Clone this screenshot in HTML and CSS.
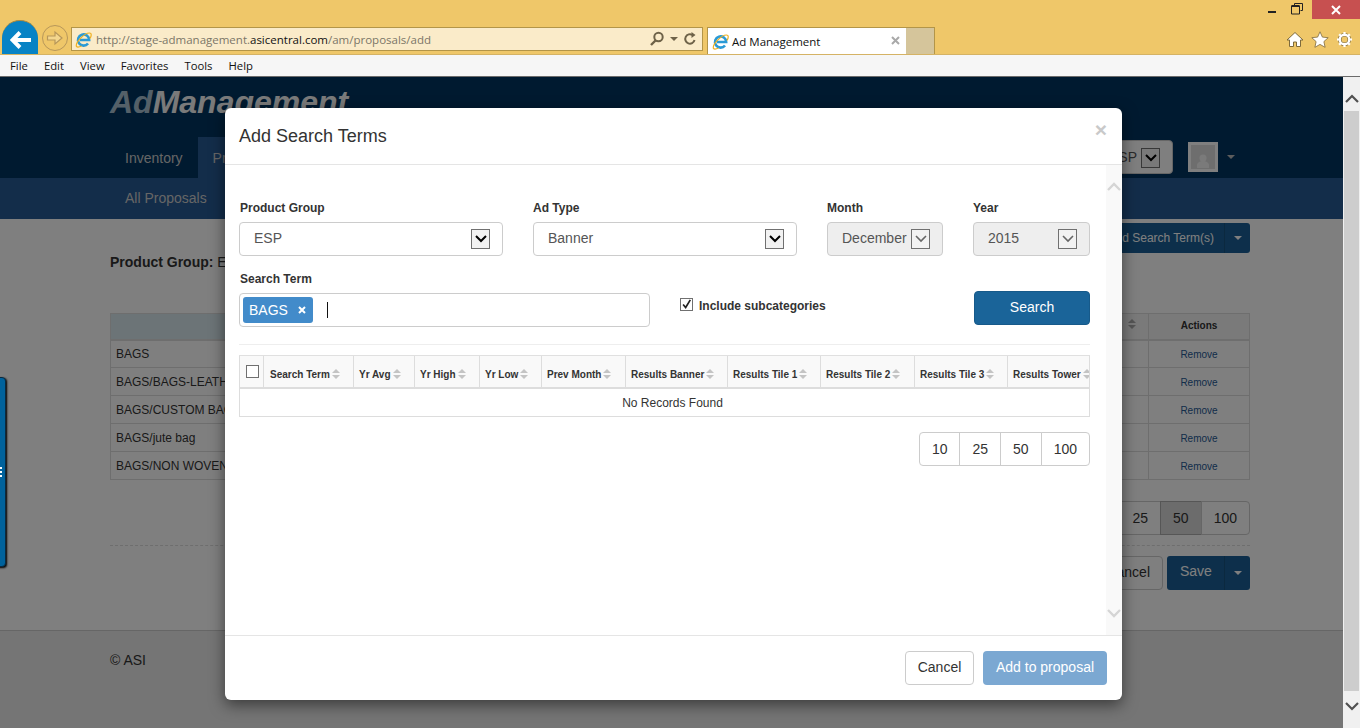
FILE: index.html
```html
<!DOCTYPE html>
<html lang="en">
<head>
    <meta charset="UTF-8">
    <title>Ad Management</title>
    <link rel="stylesheet" href="styles.css">
</head>
<body>
    <div class="browser-bar">
        <div class="window-controls">
            <svg class="win-icon" width="12" height="12" viewBox="0 0 12 12"><rect x="1" y="7" width="8" height="2" fill="#222"/></svg>
            <svg class="win-icon restore" width="12" height="12" viewBox="0 0 12 12"><path d="M3.500 2.500V.5h8v7h-2M.5 3h8v8h-8z" fill="none" stroke="#222"/><path d="M.5 3h8" stroke="#222" stroke-width="2"/></svg>
            <div class="win-close">
                <svg width="10" height="10" viewBox="0 0 10 10"><path d="M1 1l8 8M9 1l-8 8" stroke="#fff" stroke-width="2"/></svg>
            </div>
        </div>
        <div class="nav-row">
            <div class="back-btn">
                <svg width="21" height="18" viewBox="0 0 21 18"><path d="M10 1.500L2.500 9l7.500 7.500M3 9h18" fill="none" stroke="#fff" stroke-width="4"/></svg>
            </div>
            <div class="fwd-btn">
                <svg width="18" height="16" viewBox="0 0 18 16"><path d="M1.500 6H9V2l7 6-7 6v-4H1.500z" fill="#f3d68d" stroke="#b7975a" stroke-width="1.200"/></svg>
            </div>
            <div class="address-bar">
                <svg class="ie-icon" width="17" height="17" viewBox="0 0 17 17"><path d="M13 12.500A5.600 5.600 0 1 1 14.200 9H5" fill="none" stroke="#2a9ad6" stroke-width="2.600"/><path d="M1.500 15.500C0 12 9 2 14.500 2c2.500 0 2 3 .5 5.500M1.500 15.500c1 1 3 .5 5-.5" fill="none" stroke="#eeb021" stroke-width="1.200"/></svg>
                <span class="url">http://stage-admanagement.<b>asicentral.com</b>/am/proposals/add</span>
                <div class="address-tools">
                    <svg width="16" height="16" viewBox="0 0 16 16"><circle cx="9.500" cy="6" r="4.200" fill="none" stroke="#6e6248" stroke-width="2"/><path d="M6.500 9.500L2 14" stroke="#6e6248" stroke-width="2.400"/></svg>
                    <span class="tiny-caret"></span>
                    <svg width="14" height="14" viewBox="0 0 14 14"><path d="M11.500 8A4.700 4.700 0 1 1 9.500 3" fill="none" stroke="#6e6248" stroke-width="2"/><path d="M8.500 0v6l4-3z" fill="#6e6248"/></svg>
                </div>
            </div>
            <div class="tab">
                <svg class="ie-icon" width="17" height="17" viewBox="0 0 17 17"><path d="M13 12.500A5.600 5.600 0 1 1 14.200 9H5" fill="none" stroke="#2a9ad6" stroke-width="2.600"/><path d="M1.500 15.500C0 12 9 2 14.500 2c2.500 0 2 3 .5 5.500M1.500 15.500c1 1 3 .5 5-.5" fill="none" stroke="#eeb021" stroke-width="1.200"/></svg>
                <span class="tab-title">Ad Management</span>
                <svg class="tab-close" width="9" height="9" viewBox="0 0 9 9"><path d="M1 1l7 7M8 1L1 8" stroke="#a9a9a9" stroke-width="2"/></svg>
            </div>
            <div class="new-tab"></div>
            <div class="browser-tools">
                <svg width="18" height="17" viewBox="0 0 18 17"><path d="M9 1.500L1 9h2.500v6.500h4V11h3v4.500h4V9H17z" fill="#fff" stroke="#7d6a3c"/></svg>
                <svg width="18" height="17" viewBox="0 0 18 17"><path d="M9 .8l2.400 5.300 5.800.6-4.300 3.900 1.200 5.700L9 13.400l-5.100 2.900 1.200-5.700L.8 6.700l5.800-.6z" fill="#fff" stroke="#7d6a3c" stroke-width=".8"/></svg>
                <svg width="17" height="17" viewBox="0 0 17 17"><circle cx="8.500" cy="8.500" r="4.800" fill="none" stroke="#7d6a3c" stroke-width="3.600"/><circle cx="8.500" cy="8.500" r="4.800" fill="none" stroke="#fff" stroke-width="2.400"/><path d="M8.500 1v3M8.500 13v3M1 8.500h3M13 8.500h3M3.200 3.200l2.100 2.100M11.700 11.700l2.100 2.100M13.800 3.200l-2.100 2.100M5.300 11.700l-2.100 2.100" stroke="#fff" stroke-width="2.200"/></svg>
            </div>
        </div>
    </div>
    <div class="menu-bar">
        <span>File</span><span>Edit</span><span>View</span><span>Favorites</span><span>Tools</span><span>Help</span>
    </div>

    <div class="viewport">
        <div class="page">
            <header class="site-header">
                <div class="logo"><span class="logo-ad">Ad</span>Management</div>
                <div class="main-nav">
                    <a class="nav-link">Inventory</a>
                    <a class="nav-link active">Proposals</a>
                    <div class="nav-right">
                        <div class="fake-select small">ESP<span class="select-arrow"><svg width="12" height="8" viewBox="0 0 12 8"><path d="M1 1l5 5 5-5" fill="none" stroke="#000" stroke-width="2"/></svg></span></div>
                        <div class="avatar">
                            <svg width="18" height="18" viewBox="0 0 18 18"><circle cx="9" cy="7" r="3.500" fill="#f5f5f5"/><path d="M3 17v-3c0-2 3-4 6-4s6 2 6 4v3z" fill="#f5f5f5"/></svg>
                        </div>
                        <span class="caret light"></span>
                    </div>
                </div>
            </header>
            <nav class="sub-nav"><a>All Proposals</a></nav>
            <main class="content">
                <div class="content-top">
                    <div class="group-line"><b>Product Group:</b> ESP</div>
                    <div class="btn-group add-group">
                        <span class="btn-main">Add Search Term(s)</span><span class="btn-split"><span class="caret light"></span></span>
                    </div>
                </div>
                <table class="terms-table">
                    <thead>
                        <tr><th class="col-term">Search Term</th><th class="col-rest"><i class="sort"></i></th><th class="col-actions">Actions</th></tr>
                    </thead>
                    <tbody>
                        <tr><td>BAGS</td><td></td><td class="remove">Remove</td></tr>
                        <tr><td>BAGS/BAGS-LEATHER</td><td></td><td class="remove">Remove</td></tr>
                        <tr><td>BAGS/CUSTOM BAGS</td><td></td><td class="remove">Remove</td></tr>
                        <tr><td>BAGS/jute bag</td><td></td><td class="remove">Remove</td></tr>
                        <tr><td>BAGS/NON WOVEN</td><td></td><td class="remove">Remove</td></tr>
                    </tbody>
                </table>
                <div class="pager under-pager">
                    <span>10</span><span>25</span><span class="current">50</span><span>100</span>
                </div>
                <div class="page-actions">
                    <span class="btn-cancel">Cancel</span>
                    <div class="btn-group save-group">
                        <span class="btn-main">Save</span><span class="btn-split"><span class="caret light"></span></span>
                    </div>
                </div>
            </main>
            <footer class="site-footer">© ASI</footer>
        </div>
        <div class="overlay"></div>
        <div class="side-tab"><span class="grip"></span></div>

        <div class="modal">
            <div class="modal-header">
                <h4>Add Search Terms</h4>
                <span class="modal-close">×</span>
            </div>
            <div class="modal-body">
                <div class="modal-scroll">
                    <div class="form-row">
                        <div class="field w-product">
                            <label>Product Group</label>
                            <div class="fake-select">ESP<span class="select-arrow"><svg width="12" height="8" viewBox="0 0 12 8"><path d="M1 1l5 5 5-5" fill="none" stroke="#000" stroke-width="2"/></svg></span></div>
                        </div>
                        <div class="field w-adtype">
                            <label>Ad Type</label>
                            <div class="fake-select">Banner<span class="select-arrow"><svg width="12" height="8" viewBox="0 0 12 8"><path d="M1 1l5 5 5-5" fill="none" stroke="#000" stroke-width="2"/></svg></span></div>
                        </div>
                        <div class="field w-month">
                            <label>Month</label>
                            <div class="fake-select disabled">December<span class="select-arrow"><svg width="12" height="8" viewBox="0 0 12 8"><path d="M1 1l5 5 5-5" fill="none" stroke="#666" stroke-width="1.600"/></svg></span></div>
                        </div>
                        <div class="field w-year">
                            <label>Year</label>
                            <div class="fake-select disabled">2015<span class="select-arrow"><svg width="12" height="8" viewBox="0 0 12 8"><path d="M1 1l5 5 5-5" fill="none" stroke="#666" stroke-width="1.600"/></svg></span></div>
                        </div>
                    </div>
                    <div class="search-row">
                        <div class="field w-term">
                            <label class="term-label">Search Term</label>
                            <div class="tag-input">
                                <span class="tag">BAGS<svg width="8" height="8" viewBox="0 0 8 8"><path d="M1 1l6 6M7 1L1 7" stroke="#fff" stroke-width="2"/></svg></span>
                                <span class="text-cursor"></span>
                            </div>
                        </div>
                        <div class="subcat">
                            <span class="checkbox"><svg width="13" height="13" viewBox="0 0 13 13"><path d="M2.500 6.500l3 3.500 5.500-9" fill="none" stroke="#222" stroke-width="2"/></svg></span>
                            <span class="subcat-text">Include subcategories</span>
                        </div>
                        <span class="btn-search">Search</span>
                    </div>
                    <div class="results">
                        <div class="results-head">
                            <div class="cell cell-check"><span class="checkbox empty"></span></div>
                            <div class="cell c1">Search Term<i class="sort"></i></div>
                            <div class="cell c2">Yr Avg<i class="sort"></i></div>
                            <div class="cell c3">Yr High<i class="sort"></i></div>
                            <div class="cell c4">Yr Low<i class="sort"></i></div>
                            <div class="cell c5">Prev Month<i class="sort"></i></div>
                            <div class="cell c6">Results Banner<i class="sort"></i></div>
                            <div class="cell c7">Results Tile 1<i class="sort"></i></div>
                            <div class="cell c8">Results Tile 2<i class="sort"></i></div>
                            <div class="cell c9">Results Tile 3<i class="sort"></i></div>
                            <div class="cell c10">Results Tower<i class="sort"></i></div>
                        </div>
                        <div class="no-records">No Records Found</div>
                    </div>
                    <div class="pager modal-pager">
                        <span>10</span><span>25</span><span>50</span><span>100</span>
                    </div>
                </div>
                <div class="modal-scrollbar">
                    <svg width="14" height="9" viewBox="0 0 14 9"><path d="M1 8l6-6 6 6" fill="none" stroke="#d5d5d5" stroke-width="2.400"/></svg>
                    <svg width="14" height="9" viewBox="0 0 14 9"><path d="M1 1l6 6 6-6" fill="none" stroke="#d5d5d5" stroke-width="2.400"/></svg>
                </div>
            </div>
            <div class="modal-footer">
                <span class="btn-plain">Cancel</span>
                <span class="btn-add">Add to proposal</span>
            </div>
        </div>

        <div class="page-scrollbar">
            <div class="sb-btn sb-up"><svg width="14" height="9" viewBox="0 0 14 9"><path d="M1 8l6-6 6 6" fill="none" stroke="#505050" stroke-width="2.200"/></svg></div>
            <div class="sb-thumb"></div>
            <div class="sb-btn sb-down"><svg width="14" height="9" viewBox="0 0 14 9"><path d="M1 1l6 6 6-6" fill="none" stroke="#505050" stroke-width="2.200"/></svg></div>
        </div>
    </div>
</body>
</html>
```

FILE: styles.css
```css
* {
    box-sizing: border-box;
}

html, body {
    margin: 0;
    height: 100%;
    overflow: hidden;
}

body {
    display: flex;
    flex-direction: column;
    font-family: "Liberation Sans", Arial, sans-serif;
    font-size: 14px;
    color: #333;
    background: #fff;
}

/* browser chrome */
.browser-bar {
    position: relative;
    height: 55px;
    flex: none;
    background: #efc769;
    border-bottom: 1px solid #d5b365;
    display: flex;
    align-items: flex-end;
}

.window-controls {
    position: absolute;
    top: 0;
    right: 0;
    display: flex;
    align-items: flex-start;
}

.win-icon {
    margin-top: 4px;
    margin-right: 12px;
}

.win-icon.restore {
    margin-top: 3px;
    margin-right: 9px;
}

.win-close {
    width: 48px;
    height: 19px;
    background: #c75050;
    display: flex;
    align-items: center;
    justify-content: center;
}

.nav-row {
    display: flex;
    align-items: flex-end;
    width: 100%;
    height: 35px;
    padding-left: 2px;
}

.back-btn {
    width: 36px;
    height: 34px;
    padding-top: 4px;
    border-radius: 18px 18px 0 0;
    background: #0783c5;
    display: flex;
    align-items: center;
    justify-content: center;
    border-top: 1px solid #b08a3c;
}

.fwd-btn {
    width: 26px;
    height: 26px;
    margin: 0 3px 3px 4px;
    border-radius: 50%;
    border: 1px solid #b7975a;
    display: flex;
    align-items: center;
    justify-content: center;
}

.address-bar {
    width: 632px;
    height: 24px;
    margin-bottom: 3px;
    background: #faebc9;
    border: 1px solid #b39548;
    display: flex;
    align-items: center;
    padding-left: 3px;
    color: #7b7668;
}

.ie-icon {
    flex: none;
}

.url {
    margin-left: 4px;
    white-space: nowrap;
    font-family: "Open Sans", sans-serif;
    font-size: 11.500px;
}

.url b {
    font-weight: normal;
    color: #111;
}

.address-tools {
    margin-left: auto;
    display: flex;
    align-items: center;
    gap: 5px;
    padding-right: 5px;
}

.tiny-caret {
    width: 0;
    height: 0;
    border-left: 4px solid transparent;
    border-right: 4px solid transparent;
    border-top: 4px solid #6e6248;
}

.tab {
    width: 199px;
    height: 27px;
    margin-left: 4px;
    background: #fff;
    border: 1px solid #b39548;
    border-bottom: 0;
    border-right: 0;
    display: flex;
    align-items: center;
    padding-left: 4px;
    color: #111;
}

.tab-title {
    margin-left: 3px;
    font-family: "Open Sans", sans-serif;
    font-size: 11.500px;
}

.tab-close {
    margin-left: auto;
    margin-right: 6px;
    margin-bottom: 1px;
}

.new-tab {
    width: 29px;
    height: 27px;
    background: #d5c59b;
    border: 1px solid #b39548;
    border-bottom: 0;
    border-left: 0;
}

.browser-tools {
    margin-left: auto;
    margin-bottom: 6px;
    padding-right: 7px;
    display: flex;
    gap: 7px;
}

.menu-bar {
    height: 22px;
    flex: none;
    background: #f6f6f6;
    border-bottom: 1px solid #6b6b6b;
    display: flex;
    align-items: center;
    gap: 16px;
    padding-left: 10px;
    font-family: "Open Sans", sans-serif;
    font-size: 11.300px;
    color: #111;
}

/* page behind the modal */
.viewport {
    position: relative;
    flex: 1;
    display: flex;
    overflow: hidden;
    min-height: 0;
}

.page {
    width: 1343px;
    flex: none;
    display: flex;
    flex-direction: column;
    background: #fff;
}

.site-header {
    height: 101px;
    background: #003460;
    padding-left: 110px;
}

.logo {
    height: 60px;
    padding-top: 6px;
    font-size: 32px;
    line-height: 38px;
    font-weight: bold;
    font-style: italic;
    color: #f4f4f4;
}

.logo-ad {
    color: #a8c0d0;
}

.main-nav {
    display: flex;
    height: 41px;
    font-size: 14px;
    color: #ccc;
}

.nav-link {
    padding: 13px 15px 0;
}

.nav-link.active {
    background: #265a94;
}

.nav-right {
    margin-left: auto;
    margin-right: 108px;
    display: flex;
    align-items: flex-start;
}

.fake-select.small {
    width: 120px;
    height: 34px;
    margin-top: 3px;
    margin-right: 15px;
    padding: 0 12px;
    justify-content: flex-end;
    gap: 4px;
}

.avatar {
    width: 30px;
    height: 30px;
    margin-top: 5px;
    border: 3px solid #fff;
    background: #ddd;
    display: flex;
    align-items: flex-end;
    justify-content: center;
}

.caret {
    width: 0;
    height: 0;
    border-left: 4px solid transparent;
    border-right: 4px solid transparent;
    border-top: 4px solid #fff;
}

.nav-right .caret {
    margin: 18px 0 0 9px;
    border-top-color: #bbb;
}

.sub-nav {
    height: 41px;
    background: #265a94;
    padding: 12px 15px 0 125px;
    color: #ccc;
}

.content {
    height: 411px;
    padding: 4px 93px 0 110px;
    display: flex;
    flex-direction: column;
}

.content-top {
    display: flex;
    justify-content: space-between;
    align-items: flex-start;
    height: 90px;
}

.group-line {
    margin-top: 31px;
    color: #333;
}

.btn-group {
    display: flex;
    color: #fff;
}

.btn-main {
    height: 30px;
    padding: 0 12px;
    background: #1a5f96;
    border-radius: 3px 0 0 3px;
    line-height: 30px;
}

.add-group .btn-main {
    padding-right: 10px;
    font-size: 12px;
}

.btn-split {
    width: 26px;
    background: #1a5f96;
    border-left: 1px solid #17527f;
    border-radius: 0 3px 3px 0;
    display: flex;
    align-items: center;
    justify-content: center;
}

.terms-table {
    width: 100%;
    border-collapse: collapse;
    font-size: 12px;
}

.terms-table th, .terms-table td {
    border: 1px solid #ddd;
    height: 28px;
    padding: 0 5px;
}

.terms-table th {
    height: 26px;
    padding-bottom: 2px;
    background: #f5f5f5;
    border-bottom-width: 2px;
    font-size: 10px;
    color: #333;
}

.terms-table th.col-term {
    width: 50%;
    background: #d8e8ee;
}

.terms-table th.col-rest {
    text-align: right;
    padding-right: 12px;
}

.col-rest .sort {
    display: inline-block;
}

.col-rest .sort::before {
    border-bottom-color: #aaa;
}

.col-rest .sort::after {
    border-top-color: #aaa;
}

.col-actions {
    width: 101px;
}

.terms-table td.remove {
    padding-top: 2px;
    text-align: center;
    font-size: 10px;
    color: #265a94;
}

.pager {
    display: flex;
    justify-content: flex-end;
    height: 34px;
}

.pager span {
    padding: 0 12px;
    line-height: 32px;
    border: 1px solid #ccc;
    margin-left: -1px;
    background: #fff;
}

.pager span:first-child {
    border-radius: 4px 0 0 4px;
}

.pager span:last-child {
    border-radius: 0 4px 4px 0;
}

.under-pager {
    margin-top: 21px;
}

.pager .current {
    background: #d8d8d8;
    border-color: #adadad;
}

.page-actions {
    margin-top: 10px;
    padding-top: 10px;
    border-top: 1px dashed #ddd;
    display: flex;
    justify-content: flex-end;
}

.btn-cancel {
    height: 34px;
    padding: 0 12px;
    margin-right: 4px;
    border: 1px solid #ccc;
    border-radius: 4px;
    line-height: 31px;
}

.save-group .btn-main {
    height: 34px;
    width: 57px;
    line-height: 31px;
    padding: 0 0 0 13px;
}

.site-footer {
    flex: 1;
    background: #eaeaea;
    border-top: 1px solid #ccc;
    padding: 21px 0 0 110px;
}

.overlay {
    position: absolute;
    left: 0;
    top: 0;
    width: 1343px;
    height: 100%;
    background: rgba(0, 0, 0, 0.5);
}

.side-tab {
    position: absolute;
    left: -4px;
    top: 300px;
    width: 10px;
    height: 190px;
    background: #00629c;
    border: 1px solid #0a2a40;
    border-radius: 0 4px 4px 0;
    box-shadow: 1px 1px 2px #000;
    display: flex;
    align-items: center;
}

.grip {
    width: 5px;
    height: 11px;
    background: repeating-linear-gradient(#fff 0 2px, transparent 2px 4px);
}

.page-scrollbar {
    width: 17px;
    flex: none;
    display: flex;
    flex-direction: column;
    background: #f0f0f0;
    position: relative;
}

.sb-btn {
    flex: none;
    display: flex;
    align-items: center;
    justify-content: center;
}

.sb-up {
    height: 34px;
    padding-top: 9px;
}

.sb-down {
    height: 37px;
    padding-bottom: 7px;
}

.sb-thumb {
    flex: 1;
    margin: 0 1px;
    background: #cdcdcd;
}

/* modal */
.modal {
    position: absolute;
    left: 225px;
    top: 31px;
    width: 897px;
    height: 592px;
    background: #fff;
    border-radius: 6px;
    box-shadow: 0 5px 15px rgba(0, 0, 0, 0.5);
    display: flex;
    flex-direction: column;
}

.modal-header {
    height: 57px;
    flex: none;
    border-bottom: 1px solid #e5e5e5;
    padding: 0 15px 0 14px;
    display: flex;
    align-items: center;
    justify-content: space-between;
}

.modal-header h4 {
    margin: 0;
    font-size: 18px;
    font-weight: normal;
    color: #333;
}

.modal-close {
    margin-top: -12px;
    margin-right: 0;
    font-size: 21px;
    font-weight: bold;
    color: #c9c9c9;
}

.modal-body {
    flex: 1;
    display: flex;
    min-height: 0;
}

.modal-scroll {
    flex: 1;
    min-width: 0;
    padding: 35px 16px 0 14px;
}

.modal-scrollbar {
    width: 16px;
    flex: none;
    background: #f9f9f9;
    display: flex;
    flex-direction: column;
    justify-content: space-between;
    align-items: center;
    padding: 17px 0 17px;
}

.form-row {
    display: flex;
}

.field label {
    display: block;
    height: 22px;
    font-size: 12px;
    line-height: 16px;
    font-weight: bold;
    color: #333;
}

.w-product {
    width: 264px;
    margin-right: 30px;
}

.w-product label {
    padding-left: 1px;
}

.w-adtype {
    width: 264px;
    margin-right: 30px;
}

.w-month {
    width: 116px;
    margin-right: 30px;
}

.w-year {
    width: 117px;
}

.fake-select {
    height: 34px;
    padding: 0 12px 2px 14px;
    border: 1px solid #ccc;
    border-radius: 4px;
    background: #fff;
    display: flex;
    align-items: center;
    justify-content: space-between;
    color: #555;
}

.fake-select.disabled {
    background: #eee;
}

.select-arrow {
    width: 19px;
    height: 20px;
    flex: none;
    margin-bottom: -2px;
    background: #f2f2f2;
    border: 1px solid #707070;
    display: flex;
    align-items: center;
    justify-content: center;
}

.search-row {
    display: flex;
    align-items: flex-start;
    margin-top: 15px;
    padding-bottom: 17px;
    border-bottom: 1px solid #eee;
}

.term-label {
    padding-left: 1px;
}

.w-term {
    width: 411px;
}

.tag-input {
    height: 34px;
    border: 1px solid #ccc;
    border-radius: 4px;
    padding: 3px;
    display: flex;
    align-items: center;
}

.tag {
    height: 26px;
    padding: 0 7px 0 6px;
    background: #428bca;
    border-radius: 3px;
    color: #fff;
    display: flex;
    align-items: center;
    gap: 10px;
}

.text-cursor {
    width: 1px;
    height: 16px;
    margin-left: 14px;
    background: #111;
}

.subcat {
    display: flex;
    align-items: center;
    margin-left: 30px;
    margin-top: 27px;
    gap: 6px;
    font-size: 12px;
    font-weight: bold;
}

.subcat .checkbox {
    margin-top: -2px;
}

.subcat-text {
    padding-top: 1px;
}

.checkbox {
    width: 13px;
    height: 13px;
    border: 1px solid #707070;
    background: #fff;
    display: flex;
    align-items: center;
    justify-content: center;
    overflow: visible;
}

.btn-search {
    width: 116px;
    height: 34px;
    margin-left: auto;
    margin-top: 20px;
    background: #1a6499;
    border: 1px solid #175a8a;
    border-radius: 4px;
    color: #fff;
    text-align: center;
    line-height: 31px;
}

.results {
    margin-top: 10px;
    border: 1px solid #ddd;
    border-top-color: #e0e0e0;
    overflow: hidden;
}

.results-head {
    display: flex;
    height: 33px;
    background: #f9f9f9;
    border-bottom: 2px solid #ddd;
}

.cell {
    flex: none;
    display: flex;
    align-items: center;
    padding: 5px 0 0 5px;
    border-right: 1px solid #ddd;
    font-size: 10px;
    font-weight: bold;
    white-space: nowrap;
    color: #333;
}

.cell-check { width: 24px; padding: 0 0 0 6px; }
.c1 { width: 90px; padding-left: 6px; }
.c2 { width: 61px; }
.c3 { width: 65px; }
.c4 { width: 62px; }
.c5 { width: 84px; }
.c6 { width: 102px; }
.c7 { width: 93px; }
.c8 { width: 94px; }
.c9 { width: 93px; }
.c10 { width: 90px; border-right: 0; }

.sort {
    position: relative;
    width: 8px;
    height: 10px;
    margin-left: 2px;
    flex: none;
}

.sort::before, .sort::after {
    content: "";
    position: absolute;
    left: 0;
    border-left: 4px solid transparent;
    border-right: 4px solid transparent;
}

.sort::before {
    top: 0;
    border-bottom: 4px solid #c4c4c4;
}

.sort::after {
    bottom: 0;
    border-top: 4px solid #c4c4c4;
}

.no-records {
    height: 27px;
    padding-left: 16px;
    text-align: center;
    font-size: 12px;
    line-height: 28px;
    color: #333;
}

.modal-pager {
    margin-top: 15px;
}

.modal-footer {
    height: 65px;
    flex: none;
    border-top: 1px solid #e5e5e5;
    padding: 15px 15px 0 0;
    display: flex;
    justify-content: flex-end;
    gap: 9px;
}

.btn-plain {
    width: 69px;
    height: 34px;
    text-align: center;
    border: 1px solid #ccc;
    border-radius: 4px;
    line-height: 31px;
}

.btn-add {
    width: 124px;
    height: 34px;
    text-align: center;
    background: #7ba8d2;
    border-radius: 4px;
    color: #fff;
    line-height: 33px;
}
```
